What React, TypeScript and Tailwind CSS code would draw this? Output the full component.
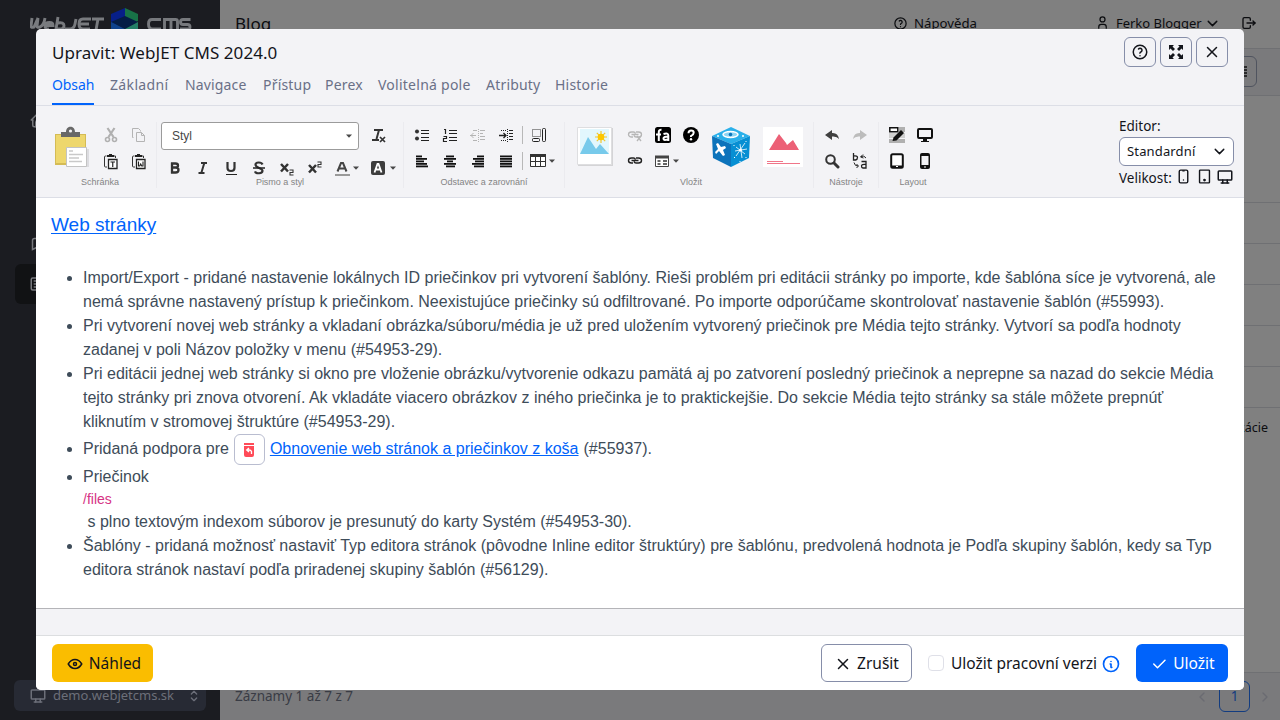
import React from "react";
import {
  TbArticle, TbCheck, TbChevronDown, TbChevronLeft, TbChevronRight, TbDeviceDesktop, TbDeviceMobile,
  TbDeviceTablet, TbEye, TbHelp, TbHome, TbInfoCircle, TbLogout, TbSelector, TbUser, TbX,
} from "react-icons/tb";

type Kids = { children?: React.ReactNode };

function Ico({ children, w = 16, h = 16, className = "" }: Kids & { w?: number; h?: number; className?: string }) {
  return (
    <svg width={w} height={h} viewBox={`0 0 ${w} ${h}`} fill="none" className={`shrink-0 ${className}`}>
      {children}
    </svg>
  );
}

function Cell({ children, className = "" }: Kids & { className?: string }) {
  return <div className={`flex h-[26px] w-7 shrink-0 items-center justify-center ${className}`}>{children}</div>;
}

function Group({ children, label, className }: Kids & { label: string; className: string }) {
  return (
    <div className={`flex h-[66px] shrink-0 flex-col justify-between ${className}`}>
      <div className="h-[54px]">{children}</div>
      <div className="flex h-[11px] items-center justify-center whitespace-nowrap font-['Liberation_Sans',sans-serif] text-[9px] leading-[11px] tracking-[-0.03px] text-[#848484]">{label}</div>
    </div>
  );
}

const Caret = () => (
  <Ico w={6} h={4}><path d="M0 .5h6L3 3.8z" fill="#474747" /></Ico>
);

function Lines({ rows }: { rows: [number, number][] }) {
  return (
    <Ico w={14} h={14}>
      {rows.map(([x, width], i) => <rect key={i} x={x} y={1.5 + i * 2.5} width={width} height="1.8" fill="#111" />)}
    </Ico>
  );
}

function Clipboard() {
  return (
    <Ico w={34} h={42}>
      <path d="M0 8h31v31H0z" fill="#d4bb55" />
      <path d="M1 9h29v28H1z" fill="#eed76d" />
      <path d="M6 6h5c0-7 9-7 9 0h5v5H6z" fill="#686868" />
      <circle cx="15.500" cy="5" r="1.600" fill="#f3f3f6" />
      <path d="M14 23h20v18H14z" fill="#dcdce0" />
      <path d="M11.500 21.500h20v19h-20z" fill="#fff" stroke="#c3c3c3" />
      <path d="M14 25h4M14 28.500h14M14 32h10M14 35.500h13" stroke="#c9c9c9" strokeWidth="1.500" />
    </Ico>
  );
}

const PasteShape = () => (
  <>
    <path d="M3.500 2H2.500q-1 0-1 1v9q0 1 1 1H4" stroke="#333" />
    <path d="M11 2h1.500v2" stroke="#333" />
    <path d="M4 1h2V0h3v1h2v2H4z" fill="#222" />
    <path d="M5.500 5.500h8.500v9h-8.500z" fill="#fff" stroke="#222" strokeWidth="1.300" />
  </>
);

function ClipboardGroup() {
  return (
    <Group label="Schránka" className="w-[112px]">
      <div className="flex">
        <div className="flex h-[54px] w-[52px] items-center justify-center pr-px pb-[5px] pl-1"><Clipboard /></div>
        <div className="ml-px grid grid-cols-2">
          <Cell>
            <Ico><path d="M4.500 1l6 9M11.500 1l-6 9" stroke="#b0b0b0" strokeWidth="2.200" /><circle cx="4.500" cy="12.500" r="2" stroke="#b0b0b0" strokeWidth="1.600" /><circle cx="11.500" cy="12.500" r="2" stroke="#b0b0b0" strokeWidth="1.600" /></Ico>
          </Cell>
          <Cell>
            <Ico><path d="M2.500 10.500h-1v-9h6l2 2v1" stroke="#b4b4b4" /><path d="M5.500 5.500h5l3 3v6h-8zM10.500 5.500v3h3" fill="#f3f3f6" stroke="#b4b4b4" /></Ico>
          </Cell>
          <Cell><Ico><PasteShape /><path d="M7.500 8h4.500M9.750 8v5" stroke="#222" strokeWidth="1.200" /></Ico></Cell>
          <Cell><Ico><PasteShape /><path d="M7.500 7.500v4.500h1.200l1-2 1 2h1.300V7.500" stroke="#222" strokeWidth="1.100" /></Ico></Cell>
        </div>
      </div>
    </Group>
  );
}

function FontGroup() {
  return (
    <Group label="Pismo a styl" className="w-[247px] border-l border-[#ebebef]">
      <div className="flex h-[28px] items-center">
        <div className="ml-1 flex h-7 w-[198px] items-center justify-between rounded-[3px] border border-[#9b9b9b] bg-white pr-[6px] pl-[10px] font-['Liberation_Sans',sans-serif] text-[12px] text-[#474747]">
          Styl<Caret />
        </div>
        <Cell className="ml-[6px]">
          <Ico>
            <path d="M3 2h9M8 2L5.500 11M1 12h7" stroke="#333" strokeWidth="2" />
            <path d="M9 9l5 5M14 9l-5 5" stroke="#333" strokeWidth="1.700" />
          </Ico>
        </Cell>
      </div>
      <div className="mt-[5px] flex h-[26px] items-center pl-1">
        <Cell><Ico><path d="M5 2.500v11M4 3.500h4.500q2.500 0 2.500 2t-2.500 2H5M8.500 7.500q3 0 3 2.500t-3 2.500H4" stroke="#333" strokeWidth="2.300" /></Ico></Cell>
        <Cell><Ico><path d="M6 3h6M3.500 13h6M9.300 3L6.300 13" stroke="#333" strokeWidth="2" /></Ico></Cell>
        <Cell><Ico><path d="M4.500 2v6q0 3 3.500 3t3.500-3V2" stroke="#333" strokeWidth="2.200" /><path d="M3 14.500h11" stroke="#222" /></Ico></Cell>
        <Cell>
          <Ico><path d="M11.500 4.500C10.500 1.800 4.500 1.800 4.500 4.800S11.500 8 11.500 10.800 5 14.300 4 11.300" stroke="#333" strokeWidth="2.200" /><path d="M2 8h12" stroke="#222" strokeWidth="1.500" /></Ico>
        </Cell>
        <Cell><Ico><path d="M2 4l7 7.500M9 4l-7 7.500" stroke="#333" strokeWidth="2.500" /><path d="M10.500 10H14v2.500h-3V15h3.500" stroke="#333" strokeWidth="1.100" /></Ico></Cell>
        <Cell><Ico><path d="M2 5l7 7.500M9 5l-7 7.500" stroke="#333" strokeWidth="2.500" /><path d="M10.500 2H14v2.500h-3V7h3.500" stroke="#333" strokeWidth="1.100" /></Ico></Cell>
        <div className="flex w-[35px] items-center justify-center gap-[3px]">
          <Ico><path d="M3.500 11.500L7 3h2l3.500 8.500M5 8.500h6" stroke="#444" strokeWidth="2" /><path d="M1 15h15" stroke="#999" strokeWidth="2" /></Ico>
          <Caret />
        </div>
        <div className="flex w-[35px] items-center justify-center gap-[4px] pl-[2px]">
          <Ico><rect x="1" y="1" width="14" height="14" rx="2" fill="#3d3d3d" /><path d="M4.500 12.500L7.500 4h1l3 8.500M6 9.500h4" stroke="#fff" strokeWidth="1.800" /></Ico>
          <Caret />
        </div>
      </div>
    </Group>
  );
}

function ParagraphGroup() {
  return (
    <Group label="Odstavec a zarovnání" className="w-[161px] border-l border-[#ebebef]">
      <div className="flex items-center pl-1">
        <Cell><Ico><circle cx="3" cy="4.500" r="2" fill="#333" /><circle cx="3" cy="11.500" r="2" fill="#333" /><path d="M7 3.500h8M7 6.500h8M7 10.500h8M7 13.500h8" stroke="#222" /></Ico></Cell>
        <Cell><Ico><path d="M2 2.500h1.500V7M1.500 9.500h3v2h-3v3h3.500" stroke="#222" strokeWidth="1.200" /><path d="M7 3.500h8M7 6.500h8M7 10.500h8M7 13.500h8" stroke="#222" /></Ico></Cell>
        <Cell><Ico><path d="M0 8.500h6M3.500 6L1 8.500 3.500 11" stroke="#b4b4b4" /><path d="M8.500 2v13" stroke="#b4b4b4" strokeDasharray="1 1" /><path d="M10 3.500h5M10 6.500h3M10 9.500h5M10 12.500h5M3 3.500h4M3 13.500h4" stroke="#b4b4b4" /></Ico></Cell>
        <Cell><Ico><path d="M1 8.500h7M5.500 6L8 8.500 5.500 11" stroke="#222" strokeWidth="1.300" /><path d="M9.500 2v13M3 3.500h5M3 13.500h5" stroke="#222" strokeDasharray="1 1" /><path d="M11 3.500h4M11 6.500h4M11 9.500h4M11 12.500h4" stroke="#222" /></Ico></Cell>
        <div className="ml-[2px] h-[18px] w-px bg-[#b8b8b8]" />
        <Cell className="ml-[2px]"><Ico><path d="M1.500 2.500h8v7h-8z" stroke="#333" strokeDasharray="1 1" /><rect x="1.500" y="11.500" width="7" height="3" rx="1" stroke="#222" /><rect x="11.500" y="1.500" width="3" height="13" rx="1" stroke="#222" /></Ico></Cell>
      </div>
      <div className="flex items-center pl-1">
        <Cell><Lines rows={[[1, 6], [1, 11], [1, 8], [1, 11], [1, 12]]} /></Cell>
        <Cell><Lines rows={[[3, 8], [1, 12], [4, 6], [1, 12], [3, 9]]} /></Cell>
        <Cell><Lines rows={[[6, 7], [2, 11], [4, 9], [1, 12], [3, 10]]} /></Cell>
        <Cell><Lines rows={[[1, 12], [1, 12], [1, 12], [1, 12], [1, 12]]} /></Cell>
        <div className="ml-[2px] h-[18px] w-px bg-[#b8b8b8]" />
        <div className="ml-[7px] flex items-center gap-[3px]">
          <Ico><path d="M.5 1.500h15v12H.5zM.5 8.500h15M5.500 3v10M10.500 3v10" fill="#fff" stroke="#333" /><path d="M0 1h16v3H0z" fill="#333" /></Ico><Caret />
        </div>
      </div>
    </Group>
  );
}

const link = "M6 10H4.500a3 2.500 0 0 1 0-5H6.500q1.500 0 2 1.500M9 5h2.500a3 2.500 0 0 1 0 5H9q-1.500 0-2-1.500M4.500 7.500h7";

function Cube() {
  return (
    <Ico w={40} h={40}>
      <path d="M20 0L39 9 20 17 1 9z" fill="#2ab0ea" />
      <path d="M1 9l19 8v23L2 31z" fill="#0c73bb" />
      <path d="M39 9l-19 8v23l18-9z" fill="#078fd3" />
      <ellipse cx="19.500" cy="7.500" rx="7.500" ry="3" fill="#8dd5f3" stroke="#fff" strokeWidth="1.500" />
      <circle cx="19.500" cy="7.500" r="1.800" fill="#0b76bd" />
      <circle cx="7" cy="9" r="1" fill="#fff" /><circle cx="32" cy="9" r="1" fill="#fff" />
      <path d="M5 17l2-1 3 4 4-1 1 2-3 2 2 5-2 1-4-5-3 3-1-2 3-3z" fill="#fff" />
      <path d="M25 29l9-13M29 17l2 14M25 20l9 7M24 24l12-2" stroke="#fff" strokeWidth=".8" />
      <circle cx="29.500" cy="23" r="1.500" fill="#fff" />
      <path d="M23 31l1-1M35 14v1M23 18v1M35 30v1M29 34v1" stroke="#fff" />
    </Ico>
  );
}

function InsertGroup() {
  return (
    <Group label="Vložit" className="w-[249px] border-l border-[#ebebef] pl-1">
      <div className="flex items-start pr-1">
        <Ico w={36} h={40} className="mt-[5px] ml-2">
          <path d="M1 1h35v38H1z" fill="#d4d4d6" /><path d="M.5.5h34v37H.5z" fill="#fff" stroke="#dedee0" />
          <path d="M3 2h29v25H3z" fill="#e2f7fd" /><path d="M3 27l8-17 8 12 4-5 9 10z" fill="#77caeb" />
          <path d="M24 4v12M18 10h12M19.800 5.800l8.400 8.400M28.200 5.800l-8.400 8.400" stroke="#f2c62d" strokeWidth="1.200" /><circle cx="24" cy="10" r="3.300" fill="#fdc700" />
        </Ico>
        <div className="ml-2 flex flex-col">
          <div className="flex">
            <Cell><Ico><path d={link} stroke="#b6b6b6" strokeWidth="1.300" /><path d="M10 9l4 5M14 9l-4 5" stroke="#b6b6b6" strokeWidth="1.300" /></Ico></Cell>
            <Cell><Ico><rect width="16" height="16" rx="2.500" fill="#000" /><path d="M3.800 14V5q0-2.500 2.700-2.300M1 7.500h5M8.500 7q4.800-1.500 4.800 1.500V14M13.300 9.800h-2.300Q8.500 10 8.500 11.800q0 2.200 4.800.2" stroke="#fff" strokeWidth="2" /></Ico></Cell>
            <Cell><Ico><circle cx="8" cy="8" r="8" fill="#000" /><path d="M5.500 6.300q0-2.800 2.600-2.800t2.600 2.300Q10.700 7.500 8 9v1" stroke="#fff" strokeWidth="2" /><circle cx="8" cy="12.300" r="1.200" fill="#fff" /></Ico></Cell>
          </div>
          <div className="flex">
            <Cell><Ico><path d={link} stroke="#222" strokeWidth="1.400" /></Ico></Cell>
            <div className="flex items-center gap-[4px] pl-[6px]">
              <Ico w={14} h={14}><path d="M.5 2.500h13v10H.5z" fill="#fff" stroke="#444" /><path d="M0 1.500h14v3H0z" fill="#444" /><path d="M2.500 7h3M8 7h4M2.500 10h3M8 10h4" stroke="#333" strokeWidth="1.500" /></Ico><Caret />
            </div>
          </div>
        </div>
        <div className="mt-[5px] ml-[6px]"><Cube /></div>
        <Ico w={40} h={40} className="mt-[5px] ml-3">
          <path d="M0 0h40v40H0z" fill="#fff" /><path d="M6 23L16 7l7 9 1 2 6-5 6 10z" fill="#ec6076" /><path d="M4 34.500h16M4 36.500h33" stroke="#f07589" />
        </Ico>
      </div>
    </Group>
  );
}

function ToolsGroup() {
  return (
    <Group label="Nástroje" className="w-[65px] border-l border-[#ebebef] px-1">
      <div className="grid w-14 grid-cols-2">
        <Cell><Ico><path d="M1 8l7-5v3q6-.5 7 6-2-3-7-2.500V13z" fill="#404040" /></Ico></Cell>
        <Cell><Ico><path d="M15 8L8 3v3Q2 5.500 1 12q2-3 7-2.500V13z" fill="#bcbcbc" /></Ico></Cell>
        <Cell><Ico><circle cx="6.500" cy="6.500" r="4.300" stroke="#333" strokeWidth="2" /><path d="M10 10l4 4" stroke="#333" strokeWidth="3" strokeLinecap="round" /></Ico></Cell>
        <Cell><Ico><path d="M1.500 0v7h2q2-.5 2-2.500t-4-1.500M9.500 8.500H14V15h-3q-1.500 0-1.500-2t4.500-1.500" stroke="#222" strokeWidth="1.300" /><path d="M14 5q-2-3-5-1.500M11 1.500L8.500 4l3 1M2 9.500q1 4 4 3.500M4.500 11l2 2-2 2" stroke="#222" /></Ico></Cell>
      </div>
    </Group>
  );
}

function LayoutGroup() {
  return (
    <Group label="Layout" className="w-[69px] border-l border-[#ebebef] pr-1 pl-1">
      <div className="grid w-14 grid-cols-2">
        <Cell><Ico><path d="M0 6h16v5H0z" fill="#d0d0d0" /><path d="M0 12h16v4H0zM10 0h6v5h-6z" fill="#b0b0b0" /><path d="M.8.8h8v4h-8z" fill="#fff" stroke="#111" strokeWidth="1.500" /><path d="M3.500 14l1-3.500L12 3l3 3-7.500 7.500z" fill="#111" /></Ico></Cell>
        <Cell><Ico><rect x="1" y="2" width="14" height="9" rx="1" stroke="#111" strokeWidth="2" /><path d="M6 12h4v2h2v1H4v-1h2z" fill="#111" /></Ico></Cell>
        <Cell><Ico><rect x="2.200" y="1.200" width="11.600" height="13.600" rx="1.500" fill="#fff" stroke="#111" strokeWidth="2" /><path d="M3 12.500h10v2H3z" fill="#111" /><path d="M7 13.500h2" stroke="#fff" /></Ico></Cell>
        <Cell><Ico><rect x="3" y="0" width="10" height="16" rx="2" fill="#111" /><path d="M4.500 3h7v9h-7z" fill="#f3f3f6" /><path d="M7 14h2" stroke="#fff" /></Ico></Cell>
      </div>
    </Group>
  );
}

function EditorOptions() {
  return (
    <div className="mr-[10px] ml-auto flex w-[115px] flex-col text-[13.500px] text-[#13151b]">
      <div className="h-[20px] leading-[18px]">Editor:</div>
      <div className="flex h-[29px] shrink-0 items-center justify-between rounded-md border border-[#868ea9] bg-white pr-[5px] pl-[7px] text-[13px] tracking-[0.150px]">
        Standardní<TbChevronDown size={17} strokeWidth={2} />
      </div>
      <div className="flex h-[25px] items-center">
        <span className="w-[56px] whitespace-nowrap">Velikost:</span>
        <TbDeviceMobile size={17} className="mb-1 shrink-0" />
        <TbDeviceTablet size={17} className="mb-1 ml-1 shrink-0" />
        <TbDeviceDesktop size={18} className="mb-1 ml-[3px] shrink-0" />
      </div>
    </div>
  );
}

const tabs = [
  ["Obsah", "w-[42px] text-[#0063fb] border-b-2 border-[#0063fb] tracking-[-0.1px]"],
  ["Základní", "w-[59px] tracking-[0.350px]"],
  ["Navigace", "w-[62px] tracking-[0.150px]"],
  ["Přístup", "w-[46px]"],
  ["Perex", "w-[37px]"],
  ["Volitelná pole", "w-[92px] tracking-[0.250px]"],
  ["Atributy", "w-[53px]"],
  ["Historie", "w-[53px]"],
];

const HeadButton = ({ children }: Kids) => (
  <button className="flex h-[30px] w-8 items-center justify-center rounded-md border border-[#868ea9]">{children}</button>
);

function Line({ children, className = "" }: Kids & { className?: string }) {
  return <div className={`h-6 whitespace-nowrap ${className}`}>{children}</div>;
}

function Content() {
  return (
    <div className="h-[410px] overflow-hidden bg-white px-[15px] font-['Liberation_Sans',sans-serif] text-[16px] leading-6 text-[#3e4c59]">
      <h2 className="pt-[14px] text-[19px] leading-[26px] text-[#0063fb] underline underline-offset-2">Web stránky</h2>
      <ul className="list-disc pt-[28px] pl-8">
        <li>
          <Line>Import/Export - pridané nastavenie lokálnych ID priečinkov pri vytvorení šablóny. Rieši problém pri editácii stránky po importe, kde šablóna síce je vytvorená, ale</Line>
          <Line>nemá správne nastavený prístup k priečinkom. Neexistujúce priečinky sú odfiltrované. Po importe odporúčame skontrolovať nastavenie šablón (#55993).</Line>
        </li>
        <li>
          <Line>Pri vytvorení novej web stránky a vkladaní obrázka/súboru/média je už pred uložením vytvorený priečinok pre Média tejto stránky. Vytvorí sa podľa hodnoty</Line>
          <Line>zadanej v poli Názov položky v menu (#54953-29).</Line>
        </li>
        <li>
          <Line>Pri editácii jednej web stránky si okno pre vloženie obrázku/vytvorenie odkazu pamätá aj po zatvorení posledný priečinok a neprepne sa nazad do sekcie Média</Line>
          <Line>tejto stránky pri znova otvorení. Ak vkladáte viacero obrázkov z iného priečinka je to praktickejšie. Do sekcie Média tejto stránky sa stále môžete prepnúť</Line>
          <Line>kliknutím v stromovej štruktúre (#54953-29).</Line>
        </li>
        <li>
          <div className="flex h-[31px] items-center whitespace-nowrap">
            <span className="pb-[2px]">Pridaná podpora pre</span>
            <span className="mr-[5px] ml-[5px] flex h-[31px] w-[31px] items-center justify-center rounded-md border border-[#b9bdd0]">
              <Ico w={12} h={14}><path d="M1 0h10v2H1zM1 3h10v9q0 2-2 2H3q-2 0-2-2z" fill="#ff4b58" /><path d="M8.500 11V8.500Q8 7 6 7H4.500M6 5L3.700 7 6 9" stroke="#fff" strokeWidth="1.300" /></Ico>
            </span>
            <span className="pb-[2px] text-[#0063fb] underline">Obnovenie web stránok a priečinkov z koša</span>
            <span className="ml-[5px] pb-[2px]">(#55937).</span>
          </div>
        </li>
        <li>
          <Line>Priečinok</Line>
          <div className="h-[21px] text-[14px] leading-[21px] text-[#d63384]">/files</div>
          <Line className="pl-[4.500px]">s plno textovým indexom súborov je presunutý do karty Systém (#54953-30).</Line>
        </li>
        <li>
          <Line>Šablóny - pridaná možnosť nastaviť Typ editora stránok (pôvodne Inline editor štruktúry) pre šablónu, predvolená hodnota je Podľa skupiny šablón, kedy sa Typ</Line>
          <Line>editora stránok nastaví podľa priradenej skupiny šablón (#56129).</Line>
        </li>
      </ul>
    </div>
  );
}

function Modal() {
  return (
    <section className="flex h-[661px] w-[1208px] flex-col overflow-hidden rounded-[5px] bg-[#f3f3f6]">
      <header className="h-[77px] shrink-0 border-b border-[#dcdee6] px-4">
        <div className="flex h-[46px] items-start justify-between pt-2">
          <h1 className="whitespace-nowrap pt-1 text-[17px] leading-6 tracking-[0.06px]">Upravit: WebJET CMS 2024.0</h1>
          <div className="flex gap-1">
            <HeadButton><TbHelp size={18} /></HeadButton>
            <HeadButton><Ico w={14} h={14}><path d="M0 0h5L3.500 1.500 6 4 4 6 1.500 3.500 0 5zM14 0v5l-1.500-1.500L10 6 8 4l2.500-2.500L9 0zM0 14V9l1.500 1.500L4 8l2 2-2.500 2.500L5 14zM14 14H9l1.500-1.500L8 10l2-2 2.500 2.500L14 9z" fill="#13151b" /></Ico></HeadButton>
            <HeadButton><TbX size={18} /></HeadButton>
          </div>
        </div>
        <nav className="flex h-[30px] gap-4 text-[14px] tracking-[0.200px] text-[#6a7087]">
          {tabs.map(([name, cls]) => <div key={name} className={`h-[30px] shrink-0 whitespace-nowrap pt-px leading-[18px] ${cls}`}>{name}</div>)}
        </nav>
      </header>
      <div className="flex h-[92px] shrink-0 items-start border-b border-[#dcdee6] pt-[11px] pl-2">
        <div className="flex pt-[5px]">
          <ClipboardGroup /><FontGroup /><ParagraphGroup /><InsertGroup /><ToolsGroup /><LayoutGroup />
        </div>
        <EditorOptions />
      </div>
      <Content />
      <div className="h-7 shrink-0 border-t border-b border-t-[#b4b4b8] border-b-[#dcdee0]" />
      <footer className="flex flex-1 items-center bg-white px-4 text-[15.500px]">
        <button className="flex h-[38px] w-[101px] items-center justify-center gap-[5px] rounded-md bg-[#fabd00] pt-px pl-[2px]"><TbEye size={18} />Náhled</button>
        <button className="ml-auto flex h-[38px] w-[91px] items-center justify-center gap-[5px] rounded-md border border-[#868ea9] pt-px"><TbX size={18} />Zrušit</button>
        <span className="ml-4 h-4 w-4 rounded-[4px] border border-[#dfe0e8]" />
        <span className="ml-[7px] w-[146px] whitespace-nowrap pt-px">Uložit pracovní verzi</span>
        <TbInfoCircle size={20} className="mt-px ml-[4px] text-[#0063fb]" />
        <button className="ml-[15px] flex h-[38px] w-[92px] items-center justify-center gap-[5px] rounded-md bg-[#0063fb] pt-px pl-px text-white"><TbCheck size={18} />Uložit</button>
      </footer>
    </section>
  );
}

function Sidebar() {
  return (
    <aside className="flex h-full w-[220px] shrink-0 flex-col bg-[#1b1c21] text-[#77787d]">
      <div className="flex h-[45px] items-start pt-2 pl-[30px]">
        <Ico w={74} h={26} className="mt-[6px]">
          <path d="M2 4l-1 8q0 2 3 1l4-9-1 8q0 2 3 1Q14 11 15 4M16 11.500h7q0-3-3.500-3-4.500 0-4.500 3.500t4 3M28 3l-2 12h5q3 0 3-3.500t-6-2.500M35 15h5q4 0 5-5l1-5M61 5h-8q-4 0-4 5t4 5h7M50 10h9M62 5h12M68 5l-2 11" stroke="#797b7f" strokeWidth="2.900" />
        </Ico>
        <Ico w={28} h={28} className="ml-[7px]">
          <path d="M0 6L14 0v11L0 20z" fill="#071f88" /><path d="M14 0l13 6v7l-13 7z" fill="#187347" /><path d="M0 14l14-6 13 6-13 7z" fill="#051d45" /><path d="M0 14l14 7-6 5-8-5z" fill="#0f428b" /><path d="M14 21l13-7v8l-9 6z" fill="#247f67" />
        </Ico>
        <Ico w={45} h={26} className="mt-[6px] ml-[8px]">
          <path d="M14 5.500H5Q1.500 5.500 1.500 10T5 15h9M17.500 17V5.500h11q2 0 2 2V17M24 6v11M43.500 5.500H36q-2.500 0-2.500 2.500t2.500 2.500h4.500q2.500 0 2.500 2.500t-2.500 2H33" stroke="#77797d" strokeWidth="2.900" />
        </Ico>
      </div>
      <div className="flex h-[150px] pt-[66px] pl-[29px]"><TbHome size={18} /></div>
      <div className="h-[69px] pt-[42px] pl-[31px]">
        <Ico w={18} h={16}><path d="M1.500 12.500v-9q0-2 2-2h12v9H5.500z" stroke="#77787d" strokeWidth="1.500" /></Ico>
      </div>
      <div className="mx-[15px] flex h-10 items-center rounded-md bg-[#111214] pl-[14px]"><TbArticle size={18} /></div>
      <div className="mt-auto mb-[9px] ml-[14px] flex h-[31px] w-48 items-center rounded-md bg-[#272a34] px-[15px] text-[13px] text-[#6c6f79]">
        <TbDeviceDesktop size={18} className="shrink-0" /><span className="ml-[6px] w-[122px] whitespace-nowrap">demo.webjetcms.sk</span><TbSelector size={16} className="ml-3 shrink-0" />
      </div>
    </aside>
  );
}

function PageBehind() {
  return (
    <div className="flex h-full w-full">
      <Sidebar />
      <main className="flex flex-1 flex-col bg-[#808080] text-[#0c0d10]">
        <div className="flex h-[49px] shrink-0 items-start border-b border-[#6f7073] pl-[15px] text-[13px] leading-5">
          <span className="w-[658px] pt-[12px] text-[17px] leading-6">Blog</span>
          <TbHelp size={15} className="mt-[16px]" /><span className="ml-[6px] w-[65px] whitespace-nowrap pt-[13px] text-[13.200px]">Nápověda</span>
          <TbUser size={15} className="mt-[15px] ml-[116px]" /><span className="ml-[6px] w-[85px] whitespace-nowrap pt-[13px] text-[13px] tracking-[-0.03px]">Ferko Blogger</span>
          <TbChevronDown size={17} className="mt-[15px] ml-[3px]" /><TbLogout size={16} className="mt-[15px] ml-5" />
        </div>
        <div className="flex h-[47px] shrink-0 items-center justify-end border-b border-[#6f7073] bg-[#7a7a7c] pr-[23px] pb-px">
          <div className="flex h-[31px] w-8 items-center justify-end rounded-md border border-[#50545f] pr-[9px]"><Ico w={6} h={12}><path d="M0 1h6M0 4h6M0 7h6M0 10h6" stroke="#111" strokeWidth="1.500" /></Ico></div>
        </div>
        <div className="h-[107px] shrink-0 border-b border-[#6f7073]" />
        {[0, 1, 2, 3, 4].map((n) => <div key={n} className="h-[41px] shrink-0 border-b border-[#6f7073]" />)}
        <div className="flex h-[41px] items-center justify-end pr-3 text-[12.500px]">kácie</div>
        <div className="mt-auto flex h-12 items-center justify-between border-t border-[#6f7073] bg-[#7a7a7c] pr-[7px] pl-[15px] text-[13.500px] text-[#393c45]">
          <span>Záznamy 1 až 7 z 7</span>
          <div className="flex items-center gap-1 text-[#6a6b72]">
            <TbChevronLeft size={16} className="mr-px" /><span className="mr-[3px] ml-1 flex h-[31px] w-[31px] items-center justify-center rounded-md border border-[#123c80] text-[#123c80]">1</span><TbChevronRight size={16} />
          </div>
        </div>
      </main>
    </div>
  );
}

export default function App() {
  return (
    <div className="relative h-[720px] w-[1280px] overflow-hidden bg-[#808080] font-['Noto_Sans','Open_Sans',sans-serif] text-[#13151b]">
      <PageBehind />
      <div className="absolute inset-0 flex items-start justify-center pt-[29px]"><Modal /></div>
    </div>
  );
}
